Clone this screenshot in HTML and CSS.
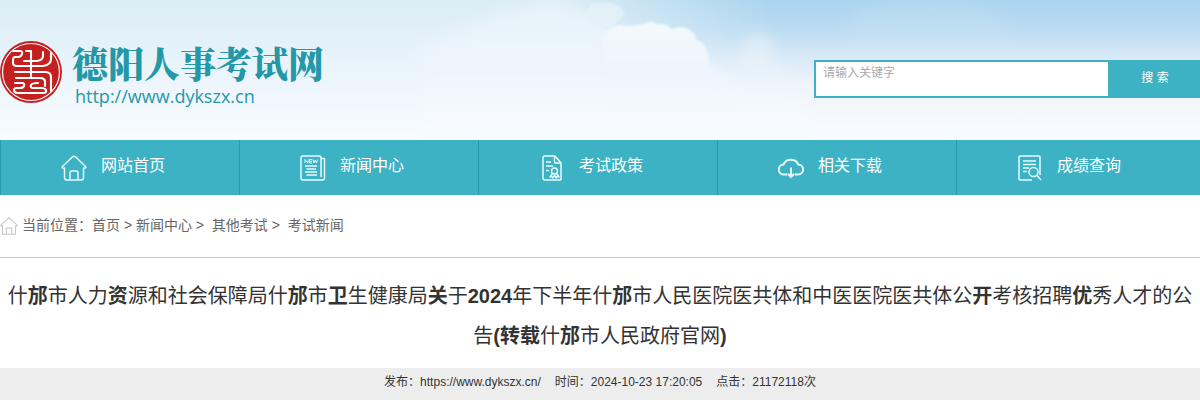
FILE: index.html
```html
<!DOCTYPE html>
<html lang="zh-CN">
<head>
  <meta charset="UTF-8" />
  <meta name="viewport" content="width=device-width, initial-scale=1.0" />
  <title>德阳人事考试网</title>
  <link rel="stylesheet" href="styles.css">
</head>
<body>
  <header class="header">
    <svg class="sky" viewBox="0 0 1200 140" preserveAspectRatio="xMidYMin slice" aria-hidden="true">
      <defs>
        <linearGradient id="base" x1="0" y1="0" x2="0" y2="1">
          <stop offset="0" stop-color="#dbedf5" />
          <stop offset="0.5" stop-color="#eaf4fb" />
          <stop offset="1" stop-color="#f9fcff" />
        </linearGradient>
        <linearGradient id="blue" x1="0" y1="0" x2="0" y2="1">
          <stop offset="0" stop-color="#a9d4ef" />
          <stop offset="0.22" stop-color="#bcdcf2" />
          <stop offset="0.42" stop-color="#dbeaf7" />
          <stop offset="0.6" stop-color="#eff4fb" />
          <stop offset="1" stop-color="#f9fcff" />
        </linearGradient>
        <linearGradient id="side">
          <stop offset="0.47" stop-color="#000" />
          <stop offset="0.64" stop-color="#fff" />
        </linearGradient>
        <linearGradient id="puff" x1="0" y1="0" x2="0" y2="1">
          <stop offset="0" stop-color="#f3f9fd" />
          <stop offset="0.4" stop-color="#eef5fc" />
          <stop offset="0.9" stop-color="#f4f9fe" stop-opacity="0" />
        </linearGradient>
        <linearGradient id="mist" x1="0" y1="0" x2="0" y2="1">
          <stop offset="0" stop-color="#e6f3f9" />
          <stop offset="0.5" stop-color="#eef5fc" />
          <stop offset="1" stop-color="#f8fcff" />
        </linearGradient>
        <mask id="fade"><rect width="1200" height="140" fill="url(#side)" /></mask>
        <filter id="soft" x="-20%" y="-20%" width="140%" height="140%"><feGaussianBlur stdDeviation="7" /></filter>
        <filter id="edge"><feGaussianBlur stdDeviation="1" /></filter>
      </defs>
      <rect width="1200" height="140" fill="url(#base)" />
      <rect width="1200" height="140" fill="url(#blue)" mask="url(#fade)" />
      <path d="M420 50 Q500 8 550 2 Q590 8 604 26 L640 40 L700 62 L735 80 L800 100 L820 140 L420 140 Z" fill="url(#mist)" filter="url(#soft)" />
      <path d="M586 14 Q588 4 597 3 Q611 2 617 5 Q624 8 624 15 Q618 24 606 27 L588 24 Z" fill="#e6f2f9" opacity=".8" filter="url(#edge)" />
      <path d="M603 38 Q606 27 621 25 Q630 27 637 25 Q641 24 646 23 Q650 19 656 24 Q665 23 672 29 Q678 26 686 28 Q695 31 696 40 Q706 42 707 52 Q711 62 706 66 Q724 74 738 86 L740 140 L603 140 Z" fill="url(#puff)" filter="url(#edge)" />
      <path d="M738 56 Q740 42 751 36 Q758 28 765 38 Q773 32 775 42 Q770 50 774 62 L785 85 L735 85 Z" fill="#e9f3fa" opacity=".6" filter="url(#soft)" />
      <path d="M849 28 Q855 0 885 4 Q900 -6 930 -4 Q1000 0 1012 32 L1012 42 L845 42 Z" fill="#d3e8f5" opacity=".2" filter="url(#soft)" />
    </svg>

    <div class="header-inner">
      <a class="logo" href="#">
        <svg class="seal" viewBox="0 0 62 62" aria-hidden="true">
          <circle cx="31" cy="31" r="31" fill="#c4201f" />
          <circle cx="31" cy="31" r="28.5" fill="none" stroke="#fff" stroke-width="1.2" />
          <g fill="none" stroke="#fff" stroke-width="2.1" stroke-linecap="round" stroke-linejoin="round">
            <path d="M13 10 H20 Q23 10 22 13 Q21 16 18 16 H15 Q13 16 13 19 V22 Q13 25 17 25 H43 Q51 24 51 18 V12" />
            <path d="M26 10 H31 V37 M24 20 H37 Q43 19 43 15 V11" />
            <path d="M15 31 H45 Q51 31 51 36 V50" />
            <path d="M16 37 H40 Q45 37 45 41 V45" />
            <path d="M15 42 H22 Q25 42 24 45 Q23 47 20 47 H17 Q14 47 14 49 Q14 52 18 52 H43 Q47 52 46 49 Q45 47 41 47 H33 Q30 47 31 44 Q32 42 38 42" />
          </g>
        </svg>
        <span class="logo-text">
          <span class="logo-name">德阳人事考试网</span>
          <span class="logo-url">http://www.dykszx.cn</span>
        </span>
      </a>

      <form class="search">
        <input type="text" class="search-input" aria-label="请输入关键字" placeholder="请输入关键字" />
        <button type="button" class="search-btn">搜 索</button>
      </form>
    </div>
  </header>

  <nav class="nav">
    <a class="nav-item" href="#">
      <svg class="icon" viewBox="0 0 26 26" aria-hidden="true">
        <path d="M1 12 L11.5 1.8 Q13 .6 14.500 1.8 L25 12 M1 12 Q1 13.500 3.500 13 V22.500 Q3.500 25 6 25 H20 Q22.500 25 22.500 22.500 V13 Q25 13.500 25 12 M9 25 V17.500 Q9 16 10.500 16 H15.500 Q17 16 17 17.500 V25" />
      </svg>
      <span>网站首页</span>
    </a>
    <a class="nav-item" href="#">
      <svg class="icon" viewBox="0 0 26 26" aria-hidden="true">
        <path d="M21 22 V2.500 Q21 1 19.500 1 H2.500 Q1 1 1 2.500 V23 Q1 25 3 25 H22.500 Q24.500 25 24.500 23 V3.500 H21" />
        <path d="M5 11 H17 M6.500 14 H16 M5 17 H17 M6.500 20 H17" />
        <path class="thin" d="M5 8 V4.500 L8 8 V4.500 M12 4.500 H9.500 V8 H12 M9.500 6.200 H12 M13 4.500 L14 8 L15.200 5 L16.400 8 L17.500 4.500" />
      </svg>
      <span>新闻中心</span>
    </a>
    <a class="nav-item" href="#">
      <svg class="icon" viewBox="0 0 26 26" aria-hidden="true">
        <path d="M22 25 V8 L16 1 H6 Q4 1 4 3 V23 Q4 25 6 25 H22 M15.500 1.500 V7 Q15.500 8 16.500 8 H21.500" />
        <path d="M7 7 H12 M7 11 H14 M7 15.500 H10" />
        <circle cx="15.500" cy="16" r="3" />
        <path d="M13.500 18.500 L11 22 L13 21.500 L14 23 L15.500 20 L17 23 L18 21.500 L20 22 L17.500 18.500" />
      </svg>
      <span>考试政策</span>
    </a>
    <a class="nav-item" href="#">
      <svg class="icon" viewBox="0 0 26 26" aria-hidden="true">
        <path class="bold" d="M9 19.500 H6 A5 5 0 0 1 5.500 9.500 A8 7.500 0 0 1 20.300 9.500 A5 5 0 0 1 20 19.500 H17 M13 12.500 V21.500 M9.800 18.800 L13 22 L16.200 18.800" />
      </svg>
      <span>相关下载</span>
    </a>
    <a class="nav-item" href="#">
      <svg class="icon" viewBox="0 0 26 26" aria-hidden="true">
        <path d="M15 25 H3 Q2 25 2 24 V2 Q2 1 3 1 H22 Q23 1 23 2 V20" />
        <path d="M6 6 H19 M6 9.500 H19 M6 13 H12 M6 16.500 H10" />
        <circle cx="16.500" cy="17" r="4.500" />
        <path d="M20 20.500 L24 25" />
      </svg>
      <span>成绩查询</span>
    </a>
  </nav>

  <div class="crumbs">
    <svg class="crumb-icon" viewBox="0 0 26 26" aria-hidden="true">
      <path d="M1 12 L13 1 L25 12 M1 12 Q1 13.500 3.500 13 V25 H22.500 V13 Q25 13.500 25 12 M9 25 V16 H17 V25" />
    </svg>
    <span>当前位置：<a href="#">首页</a> &gt; <a href="#">新闻中心</a> &gt;&nbsp; <a href="#">其他考试</a> &gt;&nbsp; <a href="#">考试新闻</a></span>
  </div>

  <main>
    <h1 class="title">什<b>邡</b>市人力<b>资</b>源和社会保障局什<b>邡</b>市<b>卫</b>生健康局<b>关</b>于<b>2024</b>年下半年什<b>邡</b>市人民医院医共体和中医医院医共体公<b>开</b>考核招聘<b>优</b>秀人才的公告<b>(转载</b>什<b>邡</b>市人民政府官网<b>)</b></h1>
    <div class="meta">
      <span>发布：https://www.dykszx.cn/</span>
      <span>时间：2024-10-23 17:20:05</span>
      <span>点击：21172118次</span>
    </div>
  </main>
</body>
</html>
```

FILE: styles.css
```css
* {
  box-sizing: border-box;
}
body {
  margin: 0;
  background: #fff;
  color: #333;
  font-family: "Liberation Sans", "Noto Sans CJK SC", sans-serif;
  font-size: 12px;
}
a {
  color: inherit;
  text-decoration: none;
}
.header {
  position: relative;
  height: 140px;
  overflow: hidden;
}
.sky {
  position: absolute;
  top: 0;
  left: 0;
  width: 100%;
  height: 100%;
}
.header-inner {
  position: relative;
  display: flex;
  justify-content: space-between;
  align-items: flex-start;
}
.logo {
  display: flex;
  gap: 10px;
  padding-top: 41px;
  color: #2598a8;
}
.seal {
  width: 62px;
  height: 62px;
}
.logo-text {
  display: flex;
  flex-direction: column;
}
.logo-name {
  font-family: "Noto Serif CJK SC", "Noto Sans CJK SC", serif;
  font-size: 36px;
  font-weight: 900;
  line-height: 44px;
}
.logo-url {
  padding-left: 3px;
  font-family: "Open Sans", sans-serif;
  font-size: 18px;
  line-height: 22px;
}
.search {
  display: flex;
  width: 386px;
  height: 38px;
  margin-top: 60px;
}
.search-input {
  flex: 1;
  min-width: 0;
  padding: 0 7px 12px;
  border: 2px solid #3cb2c4;
  border-radius: 0;
  background: #fff;
  font-family: inherit;
  font-size: 12px;
  outline: none;
}
.search-input::placeholder {
  color: #aaa;
}
.search-btn {
  width: 90px;
  padding: 0 0 6px;
  border: none;
  background: #3cb2c4;
  color: #fff;
  font-family: inherit;
  font-size: 12px;
  cursor: pointer;
}
.nav {
  display: grid;
  grid-template-columns: repeat(5, 1fr);
  height: 55px;
  padding-right: 5px;
  background: #3cb2c4;
}
.nav-item {
  display: flex;
  align-items: center;
  gap: 14px;
  padding-left: 60px;
  border-left: 1px solid #2a9aab;
  color: #fff;
  font-size: 16px;
  line-height: 24px;
}
.nav-item span {
  padding-bottom: 4px;
}
.icon {
  width: 26px;
  height: 26px;
  fill: none;
  stroke: #e6fbff;
  stroke-width: 1.5;
  stroke-linejoin: round;
}
.icon .thin {
  stroke-width: 1;
}
.icon .bold {
  stroke-width: 2;
}
.crumbs {
  display: flex;
  align-items: center;
  gap: 4px;
  height: 63px;
  border-bottom: 1px solid #ccc;
  color: #666;
  font-size: 14px;
}
.crumbs span {
  padding-bottom: 4px;
}
.crumb-icon {
  width: 18px;
  height: 18px;
  fill: none;
  stroke: #c4c4c4;
  stroke-width: 1.5;
}
.title {
  margin: 0;
  padding: 18px 0 12px;
  font-size: 20px;
  font-weight: normal;
  line-height: 40px;
  text-align: center;
}
.meta {
  display: flex;
  justify-content: center;
  gap: 14px;
  padding-bottom: 4px;
  background: #ededed;
  line-height: 28px;
}
```
